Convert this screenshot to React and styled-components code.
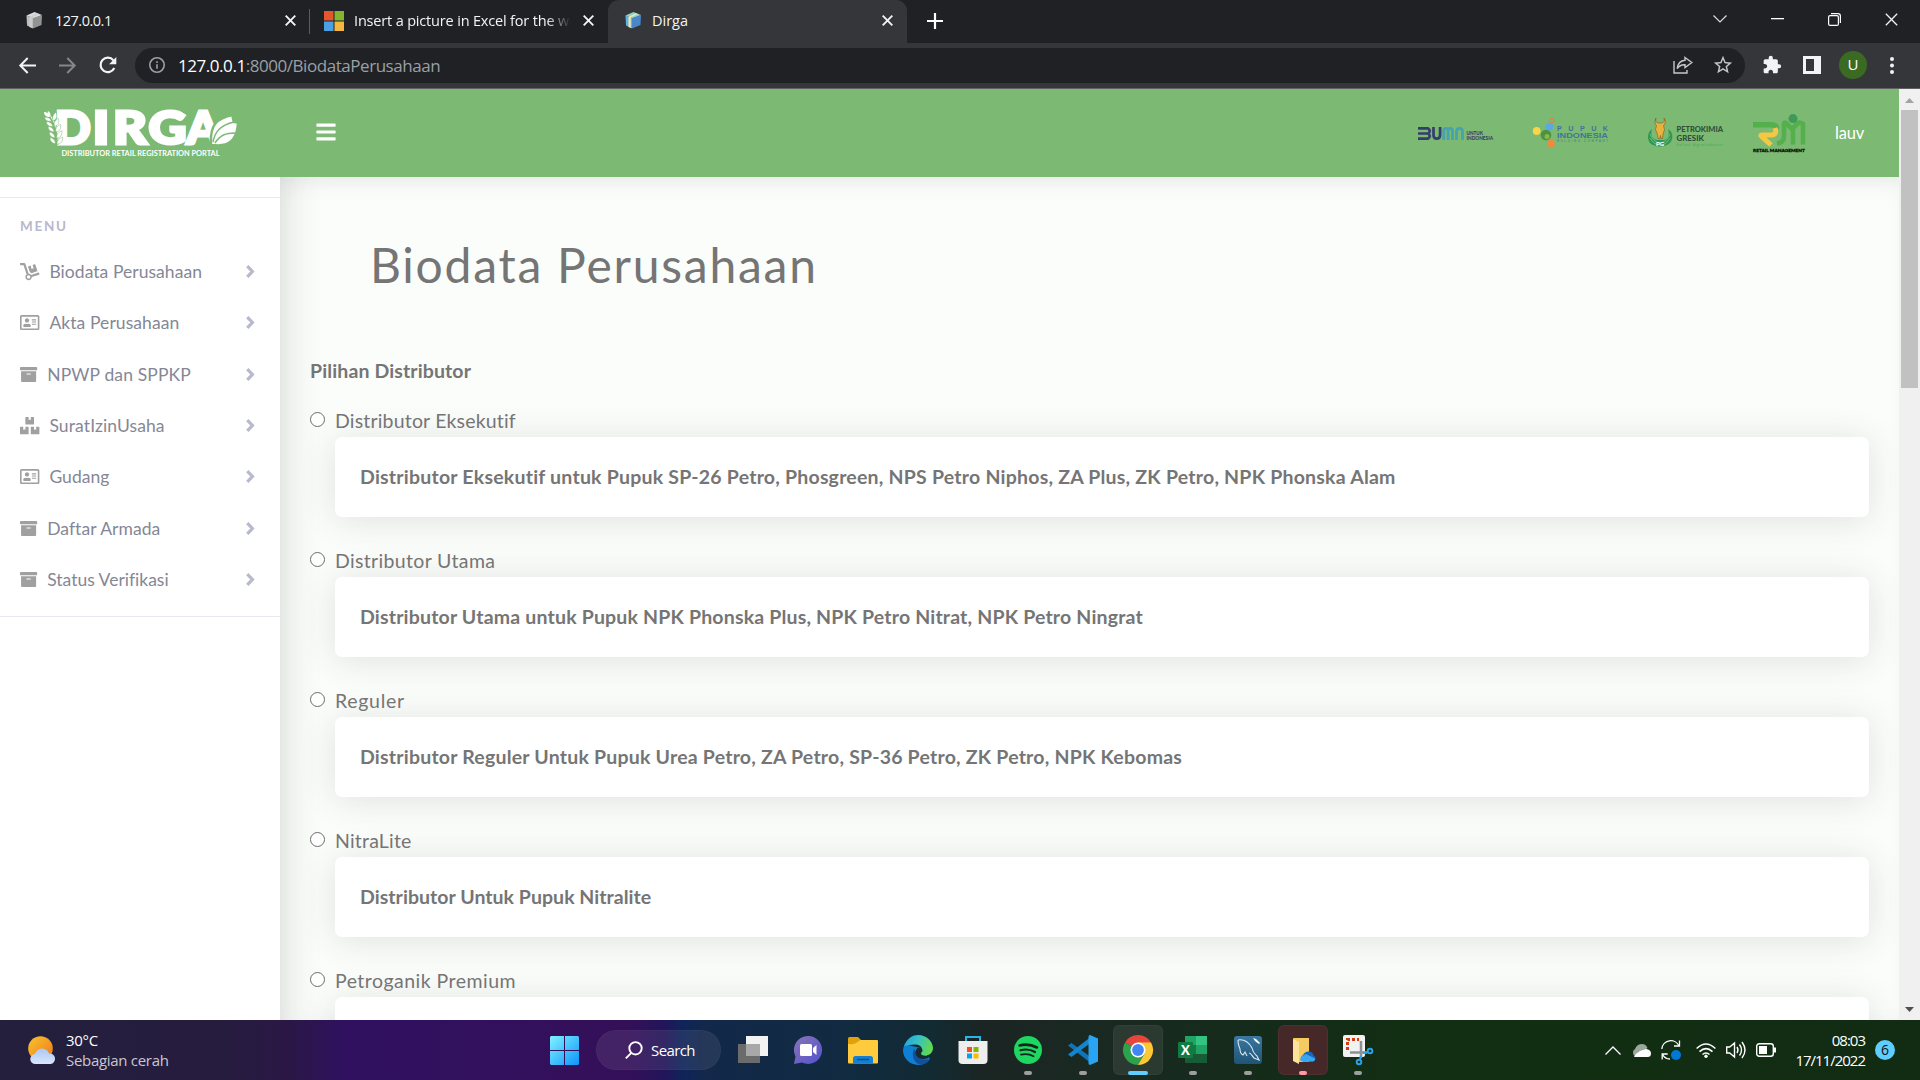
import React from "react";
import styled, { createGlobalStyle } from "styled-components";
import { FaArchive, FaBars, FaBoxes, FaDolly, FaRegAddressCard } from "react-icons/fa";
import { MdExtension, MdStarBorder } from "react-icons/md";

const ui = '"Open Sans", "Noto Sans", sans-serif';
const body = 'Lato, "Open Sans", sans-serif';

const Global = createGlobalStyle`
  * { box-sizing: border-box; }
  body { margin: 0; background: #202124; overflow: hidden; }
  svg { display: block; flex: none; overflow: visible; }
`;

const Screen = styled.div`
  width: 1920px;
  height: 1080px;
  display: flex;
  flex-direction: column;
  overflow: hidden;
  font-family: ${body};
  font-variant-ligatures: none;
`;

/* ---------- browser chrome ---------- */
const TabStrip = styled.div`
  height: 43px;
  flex: none;
  display: flex;
  align-items: stretch;
  background: #202124;
  color: #f1f3f4;
  font: 14.5px ${ui};
`;
const Tab = styled.div`
  width: ${(p) => p.$w}px;
  padding: 0 ${(p) => p.$pr}px 2px ${(p) => p.$pl}px;
  display: flex;
  align-items: center;
  border-radius: 11px 11px 0 0;
  background: ${(p) => (p.$active ? "#35363a" : "transparent")};
`;
const TabTitle = styled.span`
  flex: 1;
  min-width: 0;
  margin-left: ${(p) => p.$gap}px;
  margin-right: 10px;
  height: 22px;
  line-height: 22px;
  overflow: hidden;
  white-space: nowrap;
  letter-spacing: ${(p) => p.$ls || 0}px;
  ${(p) => p.$fade && "mask-image: linear-gradient(90deg, #000 88%, transparent 99%);"}
`;
const TabSeparator = styled.div`
  width: 1px;
  height: 25px;
  margin-top: 9px;
  background: #5b5c60;
`;
const StripFill = styled.div`flex: 1;`;
const PlusSlot = styled.div`
  padding: 13px 20px;
`;
const WindowButtons = styled.div`
  display: flex;
  align-items: center;
  gap: 44px;
  padding: 0 22px 5px 0;
`;

const Toolbar = styled.div`
  height: 46px;
  flex: none;
  display: flex;
  align-items: center;
  padding: 0 26px 1px 19px;
  background: #35363a;
  border-bottom: 1px solid #606165;
`;
const NavButtons = styled.div`
  display: flex;
  gap: 23px;
  width: 116px;
`;
const Omnibox = styled.div`
  width: 1610px;
  height: 35px;
  border-radius: 18px;
  background: #202124;
  display: flex;
  align-items: center;
  padding: 0 11px 0 14px;
`;
const Url = styled.div`
  flex: 1;
  margin-left: 13px;
  font: 17px ${ui};
  color: #9aa0a6;
  letter-spacing: -0.45px;
  b { font-weight: 400; color: #fff; }
`;
const OmniActions = styled.div`
  display: flex;
  align-items: center;
  gap: 19px;
`;
const ToolActions = styled.div`
  flex: 1;
  display: flex;
  align-items: center;
  gap: 21px;
  padding-left: 17px;
`;
const Avatar = styled.div`
  width: 28px;
  height: 28px;
  margin: 0 2px 0 -3px;
  border-radius: 50%;
  background: #3b6a22;
  color: #fff;
  font: 15px/27px ${ui};
  text-align: center;
`;

/* ---------- site ---------- */
const Viewport = styled.div`
  height: 931px;
  flex: none;
  display: flex;
  background: #fff;
`;
const Site = styled.div`
  width: 1899px;
  display: flex;
  flex-direction: column;
`;
const Header = styled.header`
  position: relative;
  z-index: 1;
  height: 88px;
  flex: none;
  display: flex;
  align-items: center;
  padding: 0 35px 0 40px;
  background: #7cb972;
`;
const Burger = styled(FaBars)`
  width: 22px;
  height: 22px;
  margin-left: 67.5px;
  margin-bottom: 3px;
  color: #fff;
`;
const Partners = styled.div`
  margin-left: auto;
  display: flex;
  align-items: center;
  gap: 40px;
`;
const Holding = styled.div`
  margin-right: -10px;
`;
const UserName = styled.span`
  margin-left: -10px;
  font-size: 16.5px;
  color: #fff;
  letter-spacing: -0.2px;
`;
const Columns = styled.div`
  flex: 1;
  min-height: 0;
  display: flex;
`;
const Sidebar = styled.nav`
  width: 280px;
  flex: none;
  padding-top: 20px;
  background: #fff;
`;
const MenuGroup = styled.div`
  height: 420px;
  border-top: 1px solid #e8e9f0;
  border-bottom: 1px solid #e8e9f0;
  padding: 18px 25px 0 20px;
`;
const MenuHeading = styled.div`
  height: 30px;
  line-height: 20px;
  font-size: 13.5px;
  font-weight: 700;
  color: #b7b9cc;
  letter-spacing: 1.7px;
`;
const MenuItem = styled.a`
  height: 51.3px;
  display: flex;
  align-items: center;
  color: #858796;
  font-size: 17.5px;
  letter-spacing: ${(p) => p.$ls}px;
`;
const MenuIcon = styled.span`
  display: flex;
  margin-right: 10px;
  color: #a0a0a0;
  svg { height: 17.2px; width: ${(p) => (p.$wide ? 19.4 : 17.2)}px; }
`;
const ChevronSlot = styled.span`
  margin-left: auto;
`;
const Main = styled.main`
  flex: 1;
  overflow: hidden;
  padding: 58px 30px 0;
  background: #fbfdfa;
  color: #757575;
  box-shadow: inset 0 14px 24px -12px rgba(58, 59, 69, 0.1), inset 30px 0 35px -22px rgba(58, 59, 69, 0.14);
`;
const Title = styled.h1`
  margin: 0;
  padding-left: 60px;
  height: 118px;
  font-size: 48px;
  line-height: 60px;
  font-weight: 400;
  letter-spacing: 1.76px;
`;
const Legend = styled.div`
  height: 46px;
  line-height: 36px;
  font-size: 19.5px;
  font-weight: 700;
  letter-spacing: 0.12px;
`;
const Option = styled.section`
  height: 140px;
`;
const OptionLabel = styled.label`
  height: 38px;
  display: flex;
  align-items: center;
  padding-top: 4px;
  gap: 10px;
  font-size: 19.5px;
  letter-spacing: ${(p) => p.$ls}px;
`;
const Radio = styled.span`
  width: 15px;
  height: 15px;
  margin-bottom: 1px;
  border: 1px solid #6b6b6b;
  border-radius: 50%;
  background: #fff;
`;
const Card = styled.div`
  height: 80px;
  margin-left: 25px;
  padding: 0 25px 2px;
  display: flex;
  align-items: center;
  border-radius: 7px;
  background: #fff;
  box-shadow: 0 3px 35px rgba(58, 59, 69, 0.14);
  font-size: 19.5px;
  font-weight: 700;
  letter-spacing: ${(p) => p.$ls}px;
`;
const Scrollbar = styled.div`
  width: 21px;
  display: flex;
  flex-direction: column;
  align-items: center;
  justify-content: space-between;
  background: #f0f0f0;
  padding: 9px 0 8px;
`;
const Thumb = styled.div`
  width: 17px;
  height: 278px;
  margin: 7px 0 auto;
  background: #c1c1c1;
`;

/* ---------- taskbar ---------- */
const Taskbar = styled.footer`
  height: 60px;
  flex: none;
  display: flex;
  align-items: center;
  color: #fff;
  font: 15px/20px ${ui};
  background: linear-gradient(90deg, #241f3d 0, #261c3e 230px, #2b1746 290px, #2f1160 345px, #34105c 560px, #341059 630px, #22155a 665px, #10245a 682px, #13284a 705px, #112b40 850px, #132a30 940px, #1b2523 985px, #1a2922 1090px, #152b1b 1250px, #122e13 1400px, #112c12 1920px);
`;
const Weather = styled.div`
  width: 550px;
  display: flex;
  align-items: center;
  gap: 10px;
  padding-left: 28px;
`;
const Stack = styled.div`
  letter-spacing: -0.3px;
  span { display: block; color: #c9c6d2; }
`;
const Clock = styled.div`
  margin-left: 9px;
  text-align: right;
  letter-spacing: -1px;
  span { display: block; }
`;
const SearchPill = styled.div`
  width: 125px;
  height: 40px;
  margin: 0 4px 0 17px;
  display: flex;
  align-items: center;
  gap: 8px;
  padding-left: 29px;
  border-radius: 20px;
  background: rgba(255, 255, 255, 0.08);
  box-shadow: inset 0 0 0 1px rgba(255, 255, 255, 0.03);
  letter-spacing: -0.6px;
`;
const AppSlot = styled.div`
  width: 55px;
  height: 60px;
  padding: 5px 2.5px;
`;
const AppTile = styled.div`
  height: 50px;
  border-radius: 6px;
  display: flex;
  flex-direction: column;
  align-items: center;
  justify-content: space-between;
  padding-top: 10px;
  background: ${(p) => p.$bg || "transparent"};
  box-shadow: inset 0 0 0 1px ${(p) => (p.$bg ? "rgba(255,255,255,.04)" : "transparent")};
`;
const RunMark = styled.i`
  width: ${(p) => (p.$wide ? 20 : 8)}px;
  height: 4px;
  border-radius: 2px;
  background: ${(p) => p.$c || "transparent"};
`;
const Tray = styled.div`
  flex: 1;
  display: flex;
  align-items: center;
  justify-content: flex-end;
  gap: 10px;
  padding-right: 25px;
`;
const TrayGroup = styled.div`
  display: flex;
  align-items: center;
  gap: 10px;
  margin-right: 5px;
`;
const Count = styled.div`
  width: 20px;
  height: 20px;
  border-radius: 50%;
  background: #60cdff;
  color: #111;
  font: 14px/20px ${ui};
  text-align: center;
`;

/* ---------- drawings ---------- */
const Cross = ({ s = 11, w = 1.9 }) => (
  <svg width={s} height={s} viewBox="0 0 11 11" stroke="#f1f3f4" strokeWidth={w} fill="none"><path d="M.7 .7 10.3 10.3M10.3 .7 .7 10.3" /></svg>
);
const Chevron = () => (
  <svg width="9" height="13" viewBox="0 0 9 13" fill="none" stroke="#b7b9cc" strokeWidth="3.200"><path d="M1.300 1.200 6.400 6.500 1.300 11.800" /></svg>
);
const CubeIcon = ({ grey }) => (
  <svg width="17" height="17" viewBox="0 0 17 17">
    <path d="M8.500 0 16 3 8 6.500 .5 3.500z" fill={grey ? "#dcdcdc" : "#8fd3c8"} />
    <path d="M.5 3.500 7 6V16.500L1 13.500z" fill={grey ? "#bdbdbd" : "#5fb2e4"} />
    <path d="M7 6 16 3 15.500 13 7 16.500z" fill={grey ? "#939393" : "#4a86c8"} />
    <path d="M3.500 4.800 11 1.200l1.800.7L5.800 5.600V16L3.500 15z" fill={grey ? "#cdcdcd" : "#efe8a8"} />
  </svg>
);
const MicrosoftIcon = () => (
  <svg width="20" height="20" viewBox="0 0 20 20">
    <path fill="#e4572e" d="M0 0h9.500v9.500H0z" /><path fill="#84b52f" d="M10.500 0H20v9.500h-9.500z" />
    <path fill="#4aa0e6" d="M0 10.500h9.500V20H0z" /><path fill="#f4b63f" d="M10.500 10.500H20V20h-9.500z" />
  </svg>
);
const Arrow = ({ back }) => (
  <svg width="17" height="17" viewBox="0 0 17 17" fill="none" stroke={back ? "#f1f3f4" : "#85868a"} strokeWidth="2" transform={back ? undefined : "scale(-1 1)"}>
    <path d="M17 8.500H1.500M8.700 1 1.300 8.500l7.400 7.500" />
  </svg>
);
const Reload = () => (
  <svg width="18" height="17" viewBox="0 0 18 17" fill="none" stroke="#f1f3f4" strokeWidth="2.200">
    <path d="M15.300 11a7.200 7.200 0 1 1-.9-7.600" /><path d="M17.300 0v7.200h-7.200z" fill="#f1f3f4" stroke="none" />
  </svg>
);
const Info = () => (
  <svg width="16" height="16" viewBox="0 0 16 16" fill="none" stroke="#9aa0a6" strokeWidth="1.600"><circle cx="8" cy="8" r="7.200" /><path d="M8 7.200v4.500M8 4.200v1.700" /></svg>
);
const Share = () => (
  <svg width="20" height="18" viewBox="0 0 20 18" fill="none" stroke="#c4c7cb" strokeWidth="1.400">
    <path d="M1 5v12h13v-3" /><path d="M12 1.500 18.800 6.500 12 11.500V8.700C8.500 8.500 6 9.800 4.200 12.600 4.800 7.800 7.500 4.700 12 4.300z" />
  </svg>
);
const SidePanel = () => (
  <svg width="18" height="18" viewBox="0 0 18 18"><path d="M0 0h18v18H0z" fill="#f1f3f4" /><path d="M3 3h8v12H3z" fill="#35363a" /></svg>
);
const Dots = () => (
  <svg width="4" height="17" viewBox="0 0 4 17" fill="#f1f3f4"><circle cx="2" cy="2" r="2" /><circle cx="2" cy="8.500" r="2" /><circle cx="2" cy="15" r="2" /></svg>
);

const logoLetters = [["D", 54.7, 36], ["I", 92.5, 17], ["R", 113, 34], ["G", 148.5, 38], ["A", 186.5, 33]];
const DirgaLogo = () => (
  <svg width="207" height="50" viewBox="40 108 207 50" fill="#fff">
    <g fontFamily="Lato" fontWeight="900" fontSize="46" stroke="#fff" strokeWidth="3">
      {logoLetters.map(([ch, x, w]) => <text key={ch} x={x} y="144" textLength={w} lengthAdjust="spacingAndGlyphs">{ch}</text>)}
    </g>
    <text x="61.500" y="156" fontFamily="Lato" fontWeight="700" fontSize="7.600" textLength="158" lengthAdjust="spacingAndGlyphs">DISTRIBUTOR RETAIL REGISTRATION PORTAL</text>
    <path d="M211 143C210 126 216 118 233 115c-1 4 0 5 1 7 2 0 3 0 4 1-1 14-6 21-16 22-4 1-7 0-11 0z" stroke="#7cb972" strokeWidth="2.400" />
    <path d="M213 142c2-11 8-17 21-20M215 143c5-8 11-10 20-10" fill="none" stroke="#7cb972" strokeWidth="1.500" />
    <path d="M46 114c6 6 11 16 10 32" fill="none" stroke="#7cb972" strokeWidth="5" />
    <path d="M48 113c8 9 11 20 10 33" fill="none" stroke="#fff" strokeWidth="1" />
    {[[50, 119, 0], [51.5, 124.5, 8], [53, 130, 14], [54, 136, 18], [54.5, 142, 22]].map(([x, y, r]) => (
      <g key={y} transform={`translate(${x + 2} ${y}) rotate(${r - 10})`} stroke="#7cb972" strokeWidth=".5">
        <path d="M-1 2c-4 0-6-2-6-5 3 0 6 2 6 5z" /><path d="M1 2c-1-4 1-6 4-8 1 4 0 7-4 8z" />
      </g>
    ))}
    <path d="M44 112c3 0 5 2 6 5-4 0-6-2-6-5zM48 111c2 1 3 3 2 5-2-1-3-3-2-5z" />
  </svg>
);
const BumnLogo = () => (
  <svg width="75" height="13" viewBox="0 0 75 13" fill="none" strokeWidth="2.700">
    <path d="M0 1.400h10.500M0 6.500h10.500M0 11.600h10.500M10 1.400q3.500 2.500 0 5.100 3.500 2.500 0 5.100M15.500 0v8q0 3.700 3.300 3.700t3.300-3.700V0" stroke="#343e6b" />
    <path d="M25.700 13V3.500q0-2.200 2.200-2.200t2.200 2.200V13M30.100 3.500q0-2.200 2.200-2.200t2.200 2.200V13M38.500 13V4.500q0-3.200 3-3.200t3 3.200V13" stroke="#45a3b0" />
    <g fill="#343e6b" fontFamily="Lato" fontWeight="900" fontSize="4.800">
      <text x="48.500" y="8.200" textLength="16.500" lengthAdjust="spacingAndGlyphs">UNTUK</text><text x="48.500" y="12.900" textLength="26.500" lengthAdjust="spacingAndGlyphs">INDONESIA</text>
    </g>
  </svg>
);
const PupukLogo = () => (
  <svg width="75" height="30" viewBox="0 0 75 30">
    <circle cx="18.700" cy="2.500" r="2.200" fill="none" stroke="#e08048" /><circle cx="3.700" cy="13" r="3.900" fill="#f8d648" />
    <circle cx="16.500" cy="8.800" r="3.800" fill="#5aa9e6" /><circle cx="13" cy="17" r="5.300" fill="#4e9140" /><circle cx="14" cy="18.500" r="2.500" fill="#86b948" />
    <circle cx="18" cy="25.500" r="3.800" fill="#f18a3c" />
    <g fill="#41749a" fontFamily="Liberation Sans">
      <text x="24" y="13.200" fontSize="7.200" textLength="51" fontWeight="700">PUPUK</text>
      <text x="24" y="20" fontSize="7.500" fontWeight="700" textLength="51" lengthAdjust="spacingAndGlyphs">INDONESIA</text>
      <text x="24" y="24.400" fontSize="2.800" textLength="51">HOLDING COMPANY</text>
    </g>
  </svg>
);
const PetrokimiaLogo = () => (
  <svg width="75" height="30" viewBox="0 0 75 30">
    <path d="M4 11C-2 15-1 25 5 27q7 3 14 0c7-3 7-13 1-16 2 6 0 10-4 11H8.500c-4-1-6.500-5-4.500-11z" fill="#2f9950" />
    <path d="M2 16q3 8 10 9 7-1 10-9M2 20q4 7 10 7 6 0 10-7" fill="none" stroke="#7cc48a" strokeWidth=".8" />
    <path d="M8 0c-1 3 0 4.500 2 5h4c2-.5 3-2 2-5 2 3 1.500 6-.5 7.500l1 4-1.500 5-.5 4h-1.500l-.5-3-.5 3H10l-.5-4-2-5 1-4C6.500 6 6.500 3 8 0z" fill="#e9b23c" stroke="#7a5a20" strokeWidth=".6" />
    <text x="8" y="27.500" fontFamily="Lato" fontWeight="900" fontSize="6" fill="#fff">PG</text>
    <g fontFamily="Lato" fontWeight="900" fontSize="7.800" fill="#31503a">
      <text x="28.500" y="14" textLength="46.500" lengthAdjust="spacingAndGlyphs">PETROKIMIA</text><text x="28.500" y="23" textLength="27.500" lengthAdjust="spacingAndGlyphs">GRESIK</text>
      <text x="28.500" y="28.400" fontSize="3.600" fill="#4fae5c" textLength="46.500">Solusi Agroindustri</text>
    </g>
  </svg>
);
const RetailLogo = () => (
  <svg width="52" height="38" viewBox="0 0 52 38">
    <path d="M0 10.700h18.500q5 0 5 4" fill="none" stroke="#54b04d" strokeWidth="5.400" />
    <path d="M22 14q2.500 7-4 7H9q-2 0-.5 1.300L18 31" fill="none" stroke="#f5c842" strokeWidth="5" />
    <path d="M24 29.500q7-1 7-7.500V10q0-2 2-1l6 6 6-6q2-1 5 1v20.500" fill="none" stroke="#54b04d" strokeWidth="4.600" />
    <path d="M40 12v18.500" stroke="#54b04d" strokeWidth="4.600" />
    <circle cx="40" cy="4.600" r="4.500" fill="#3f9a57" />
    <text x="0" y="37.800" fontFamily="Lato" fontWeight="900" fontSize="4.400" fill="#0c1a0c" stroke="#0c1a0c" strokeWidth=".3" textLength="52" lengthAdjust="spacingAndGlyphs">RETAIL MANAGEMENT</text>
  </svg>
);

const WeatherIcon = () => (
  <svg width="28" height="28" viewBox="0 0 28 28">
    <defs><linearGradient id="sun" x1="0" y1="0" x2="1" y2="1"><stop stopColor="#f7c52d" /><stop offset="1" stopColor="#f0761c" /></linearGradient>
      <linearGradient id="cloud" x1="0" y1="0" x2="0" y2="1"><stop stopColor="#a9c8f5" /><stop offset="1" stopColor="#d9e6fb" /></linearGradient></defs>
    <circle cx="12.500" cy="12.500" r="12.300" fill="url(#sun)" />
    <path d="M7.500 28a5 5 0 0 1-.5-10q1.500-5 7-5.500 5.500.5 7 5a5.200 5.200 0 0 1 1.500 10.500z" fill="url(#cloud)" />
  </svg>
);
const StartIcon = () => (
  <svg width="29" height="29" viewBox="0 0 29 29">
    <defs><linearGradient id="win" x1="0" y1="0" x2="29" y2="29" gradientUnits="userSpaceOnUse"><stop stopColor="#7ff3ff" /><stop offset="1" stopColor="#0d93fb" /></linearGradient></defs>
    <path fill="url(#win)" d="M1 0h13v14H0V1zM15 0h13l1 1v13H15zM0 15h14v14H1l-1-1zM15 15h14v13l-1 1H15z" />
  </svg>
);
const SearchIcon = () => (
  <svg width="18" height="18" viewBox="0 0 18 18" fill="none" stroke="#fff" strokeWidth="1.900"><circle cx="10.500" cy="7.300" r="6.200" /><path d="M6.300 11.800.8 17.300" /></svg>
);
const S = (p) => <svg width="30" height="30" viewBox="0 0 30 30">{p.children}</svg>;
const apps = [
  { name: "views", art: <S><path d="M0 9h22v19H0z" fill="#6b6b6b" /><path d="M8 1h22v20H8z" fill="#f2f2f2" /><path d="M8 9h14v12H8z" fill="#a8a8a8" /></S> },
  { name: "chat", art: <S>
      <defs><linearGradient id="chat" x1="0" y1="0" x2="1" y2="1"><stop stopColor="#8a74b8" /><stop offset="1" stopColor="#5152cc" /></linearGradient></defs>
      <path d="M15 1a14 14 0 1 1-6 26.600L1 29l1.500-7.500A14 14 0 0 1 15 1z" fill="url(#chat)" /><rect x="7" y="9" width="12" height="12" rx="1.500" fill="#fff" /><path d="m20 13 3.500-3v10L20 17z" fill="#fff" /></S> },
  { name: "files", art: <S>
      <path d="M0 3.500Q0 2 1.500 2H10l3 3v5H0z" fill="#e0a10c" /><path d="M0 9q8 1 12-4h17q1 0 1 1v21.500q0 1-1 1H1q-1 0-1-1z" fill="#fdcb3c" />
      <path d="M5 28.500v-5q0-2.500 2.500-2.500h15q2.500 0 2.500 2.500v5z" fill="#1380d2" /><path d="M9 24.500h12" stroke="#0b4f8f" strokeWidth="1.500" /></S> },
  { name: "edge", art: <S>
      <defs><linearGradient id="edge" x1="0" y1="0" x2="1" y2=".3"><stop stopColor="#1f9fe0" /><stop offset=".5" stopColor="#35c1c8" /><stop offset="1" stopColor="#5fd853" /></linearGradient></defs>
      <path d="M0 15A15 15 0 0 0 15 30c5 0 9-2 12-6L18 13 2 9.500Q0 12 0 15z" fill="#0f7fd4" />
      <path d="M1 11C4 3 10 0 15 0c9 0 15 7 15 13 0 5-4 7.500-8 7.500-3 0-4-1-4-2 0-2 1-2 1-4 0-3-3-5-7-5-5 0-9 1.500-11 1.500z" fill="url(#edge)" />
      <path d="M11 13.500C8 20 11 28 17 29.800 21 29.600 25 27.500 27.500 23.500 23 26 15 24 13 18z" fill="#12509c" /><path d="M12.500 16.500q1-4 4-4t3 3.500c-.5 1-1.500 1.500-1.500 2.500 0 2 4 3.500 9 1.500-1 3-3.500 4-6.500 4-5 0-8.500-3.500-8-7.500z" fill="#122c30" /></S> },
  { name: "store", art: <S>
      <path d="M8 9V2h14v7" fill="none" stroke="#2cb3ea" strokeWidth="2" /><path d="M.5 6h29v19q0 4-4 4h-21q-4 0-4-4z" fill="#eeeeee" />
      <path d="M9 12h5v5H9z" fill="#f25022" /><path d="M15.500 12h5v5h-5z" fill="#7fba00" /><path d="M9 18.500h5v5H9z" fill="#00a4ef" /><path d="M15.500 18.500h5v5h-5z" fill="#ffb900" /></S> },
  { name: "music", mark: "#9ba09e", art: <S>
      <circle cx="15" cy="15" r="14" fill="#1ed760" /><g fill="none" stroke="#14261c" strokeLinecap="round"><path d="M6.500 10.500q9-2.500 17.500 2" strokeWidth="2.600" /><path d="M7.500 15.200q8-2 14.500 1.800" strokeWidth="2.200" /><path d="M8 19.600q7-1.600 12.500 1.600" strokeWidth="1.800" /></g></S> },
  { name: "code", mark: "#9ba09e", art: <S>
      <path d="m0 10.500 3.500-2.500L24 23v6z" fill="#1173b8" /><path d="m0 19.500 3.500 2.500L24 7V1z" fill="#1584cc" /><path d="m22 0 8 3.500v23L22 30q-1.500 0-1.500-2V2q0-2 1.500-2z" fill="#2aa4f2" /></S> },
  { name: "browser", mark: "#60cdff", wide: true, bg: "rgba(255,255,255,.08)", art: <S>
      <path d="M15 15 2 7.500a15 15 0 0 1 26 0z" fill="#e8453c" /><path d="M15 15 2 7.500A15 15 0 0 0 15 30l6.500-11.300z" fill="#2ba24c" /><path d="M15 30a15 15 0 0 0 13-22.500H15l6.500 11.200z" fill="#fcc934" />
      <circle cx="15" cy="15" r="7.500" fill="#fff" /><circle cx="15" cy="15" r="5.900" fill="#4285f4" /></S> },
  { name: "sheet", mark: "#9ba09e", art: <S>
      <path d="M7 1h22v27H7z" fill="#185c37" /><path d="M7 1h11v9H7z" fill="#21a366" /><path d="M18 1h11v9H18z" fill="#33c481" /><path d="M7 10h11v9H7z" fill="#107c41" /><path d="M18 10h11v9H18z" fill="#21a366" /><path d="M18 19h11v9H18z" fill="#185c37" />
      <rect y="7" width="15" height="16" rx="1" fill="#107c41" /><text x="7.500" y="19.500" textAnchor="middle" fontFamily="Lato" fontWeight="900" fontSize="13" fill="#fff">X</text></S> },
  { name: "database", mark: "#9ba09e", art: <S>
      <defs><linearGradient id="db" x1="0" y1="0" x2="0" y2="1"><stop stopColor="#3a78a0" /><stop offset="1" stopColor="#1f5476" /></linearGradient></defs>
      <rect x="1" y="1" width="28" height="28" rx="3" fill="url(#db)" /><path d="M5 5c6-1 10 1 14 8 1 5 3 6 5 8l2 4-5-2c-2-2-3-5-5-5M5 5c0 5 1 6 2 9 0 3 1 5 3 6l2-3 2 4" fill="none" stroke="#dfe9f0" strokeWidth="1.100" /><path d="m20 3 3 1 4 4-1 1-4-3z" fill="#fff" /></S> },
  { name: "cloud folder", mark: "#ff99a4", bg: "#472829", art: <S>
      <path d="M5 4q0-1 1-1h15v24H9z" fill="#f4cb63" /><path d="m5 4 6 3v22l-6-3z" fill="#fde297" /><path d="M15 26.500a3.700 3.700 0 0 1 0-6.500q2-4 6-3.500t4.500 4a3.200 3.200 0 0 1 0 6z" fill="#1668c0" /><path d="m14 21 4-2 9 4.500q0 3-2.500 3H15q-3 0-3-2.500z" fill="#38a7f0" /></S> },
  { name: "snip", mark: "#9ba09e", art: <S>
      <rect width="22" height="22" rx="2" fill="#f2f2f2" /><path d="M4.500 15V4.500H16" fill="none" stroke="#d03b10" strokeWidth="3" strokeDasharray="3 2" /><path d="M18 6v17M7 17.500h17" stroke="#8c9197" strokeWidth="2.500" fill="none" />
      <g fill="none" stroke="#2ba3e8" strokeWidth="1.900"><circle cx="27" cy="16" r="2.300" /><circle cx="16" cy="27" r="2.300" /><path d="m20 18 5-1M17 25l1-4" /></g></S> },
];

const menu = [
  { label: "Biodata Perusahaan", Icon: FaDolly, wide: true, ls: 0.05 },
  { label: "Akta Perusahaan", Icon: FaRegAddressCard, wide: true, ls: 0.08 },
  { label: "NPWP dan SPPKP", Icon: FaArchive, ls: 0.14 },
  { label: "SuratIzinUsaha", Icon: FaBoxes, wide: true, ls: 0.12 },
  { label: "Gudang", Icon: FaRegAddressCard, wide: true, ls: 0.05 },
  { label: "Daftar Armada", Icon: FaArchive, ls: 0.05 },
  { label: "Status Verifikasi", Icon: FaArchive, ls: 0 },
];
const options = [
  { label: "Distributor Eksekutif", ls: 0.18, textLs: 0.22, text: "Distributor Eksekutif untuk Pupuk SP-26 Petro, Phosgreen, NPS Petro Niphos, ZA Plus, ZK Petro, NPK Phonska Alam" },
  { label: "Distributor Utama", ls: 0.34, textLs: 0.18, text: "Distributor Utama untuk Pupuk NPK Phonska Plus, NPK Petro Nitrat, NPK Petro Ningrat" },
  { label: "Reguler", ls: 0.7, textLs: 0.21, text: "Distributor Reguler Untuk Pupuk Urea Petro, ZA Petro, SP-36 Petro, ZK Petro, NPK Kebomas" },
  { label: "NitraLite", ls: 0.2, textLs: 0.04, text: "Distributor Untuk Pupuk Nitralite" },
  { label: "Petroganik Premium", ls: 0.47, textLs: 0, text: "" },
];

export default function App() {
  return (
    <Screen>
      <Global />
      <TabStrip>
        <Tab $w={309} $pl={26} $pr={13}><CubeIcon grey /><TabTitle $gap={12} $ls={-0.5}>127.0.0.1</TabTitle><Cross /></Tab>
        <TabSeparator />
        <Tab $w={298} $pl={14} $pr={14}><MicrosoftIcon /><TabTitle $gap={10} $ls={-0.17} $fade>Insert a picture in Excel for the web</TabTitle><Cross /></Tab>
        <Tab $w={299} $pl={17} $pr={14} $active><CubeIcon /><TabTitle $gap={10}>Dirga</TabTitle><Cross /></Tab>
        <PlusSlot><svg width="16" height="16" viewBox="0 0 16 16" stroke="#fff" strokeWidth="2.200"><path d="M8 0v16M0 8h16" /></svg></PlusSlot>
        <StripFill />
        <WindowButtons>
          <svg width="14" height="8" viewBox="0 0 14 8" fill="none" stroke="#ddd" strokeWidth="1.200"><path d="m.5.5 6.500 6.500 6.500-6.500" /></svg>
          <svg width="13" height="2" viewBox="0 0 13 2"><path d="M0 0h13v1.300H0z" fill="#fff" /></svg>
          <svg width="13" height="13" viewBox="0 0 13 13" fill="none" stroke="#fff" strokeWidth="1.200"><rect x=".6" y="2.600" width="9.800" height="9.800" rx="1.500" /><path d="M3 .6h7q2.400 0 2.400 2.400v7" /></svg>
          <Cross s={13} w={1.1} />
        </WindowButtons>
      </TabStrip>
      <Toolbar>
        <NavButtons><Arrow back /><Arrow /><Reload /></NavButtons>
        <Omnibox>
          <Info /><Url><b>127.0.0.1</b>:8000/BiodataPerusahaan</Url>
          <OmniActions><Share /><MdStarBorder size={22} color="#c4c7cb" /></OmniActions>
        </Omnibox>
        <ToolActions><MdExtension size={20} color="#f1f3f4" /><SidePanel /><Avatar>U</Avatar><Dots /></ToolActions>
      </Toolbar>

      <Viewport>
        <Site>
          <Header>
            <DirgaLogo /><Burger />
            <Partners><BumnLogo /><PupukLogo /><Holding><PetrokimiaLogo /></Holding><RetailLogo /><UserName>lauv</UserName></Partners>
          </Header>
          <Columns>
            <Sidebar>
              <MenuGroup>
                <MenuHeading>MENU</MenuHeading>
                {menu.map(({ label, Icon, wide, ls }) => (
                  <MenuItem key={label} $ls={ls}>
                    <MenuIcon $wide={wide}><Icon preserveAspectRatio="none" /></MenuIcon>{label}<ChevronSlot><Chevron /></ChevronSlot>
                  </MenuItem>
                ))}
              </MenuGroup>
            </Sidebar>
            <Main>
              <Title>Biodata Perusahaan</Title>
              <Legend>Pilihan Distributor</Legend>
              {options.map((o) => (
                <Option key={o.label}>
                  <OptionLabel $ls={o.ls}><Radio />{o.label}</OptionLabel>
                  <Card $ls={o.textLs}>{o.text}</Card>
                </Option>
              ))}
            </Main>
          </Columns>
        </Site>
        <Scrollbar>
          <svg width="9" height="5" viewBox="0 0 9 5"><path d="M0 5 4.500 0 9 5z" fill="#a3a3a3" /></svg>
          <Thumb />
          <svg width="9" height="5" viewBox="0 0 9 5"><path d="M0 0h9L4.500 5z" fill="#505050" /></svg>
        </Scrollbar>
      </Viewport>

      <Taskbar>
        <Weather><WeatherIcon /><Stack>30°C<span>Sebagian cerah</span></Stack></Weather>
        <StartIcon />
        <SearchPill><SearchIcon />Search</SearchPill>
        {apps.map((a) => (
          <AppSlot key={a.name}><AppTile $bg={a.bg}>{a.art}<RunMark $c={a.mark} $wide={a.wide} /></AppTile></AppSlot>
        ))}
        <Tray>
          <TrayGroup>
            <svg width="16" height="9" viewBox="0 0 16 9" fill="none" stroke="#fff" strokeWidth="1.300"><path d="m.5 8.500 7.500-7.500 7.500 7.500" /></svg>
            <svg width="20" height="13" viewBox="0 0 20 13"><path d="M4 12a4 4 0 0 1 0-7q2-5 7-5 4 0 5.500 4L10 9z" fill="#9aa79a" /><path d="M3 13q2-4 6-6l6-2q5 .5 5 4.500 0 3.500-3.500 3.500z" fill="#fff" /></svg>
            <svg width="20" height="20" viewBox="0 0 20 20" fill="none" stroke="#fff" strokeWidth="1.300"><path d="M.8 9A9 9 0 0 1 18 6M18.500.5V6H13M1.200 19.500V14h5.500M1.500 14.500Q4 19 9 19" /><circle cx="15" cy="15" r="5" fill="#0078d7" stroke="none" /></svg>
          </TrayGroup>
          <svg width="20" height="15" viewBox="0 0 20 15" fill="none" stroke="#fff" strokeWidth="1.500"><path d="M.6 5.500q9.400-9 18.800 0M3.500 8.600q6.500-6 13 0M6.500 11.500q3.500-3 7 0" /><circle cx="10" cy="13.300" r="1.700" fill="#fff" stroke="none" /></svg>
          <svg width="20" height="18" viewBox="0 0 20 18" fill="none" stroke="#fff" strokeWidth="1.400"><path d="M.7 6h3L8.500 2v14l-4.800-4h-3zM11 6q2 3 0 6M13.500 3.500q4 5.500 0 11M16 1q6 8 0 16" /></svg>
          <svg width="20" height="14" viewBox="0 0 20 14"><rect x=".7" y=".7" width="16.600" height="12.600" rx="2.500" fill="none" stroke="#fff" strokeWidth="1.400" /><path d="M3 3h8v8H3z" fill="#fff" /><path d="M18 4.500h2v5h-2z" fill="#fff" /></svg>
          <Clock>08:03<span>17/11/2022</span></Clock>
          <Count>6</Count>
        </Tray>
      </Taskbar>
    </Screen>
  );
}
